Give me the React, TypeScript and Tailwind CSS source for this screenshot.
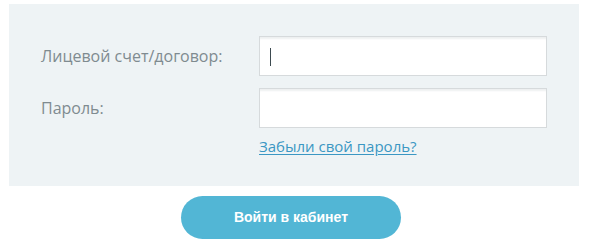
export default function App() {
  return (
    <div className="w-[591px] h-[248px] bg-white pt-[4px] font-['Open_Sans',sans-serif]">
      {/* Login panel */}
      <div className="ml-[9px] w-[570px] h-[182px] bg-[#eef3f5] pt-[32px] pl-[32px]">
        <div className="flex items-center h-[40px]">
          <label className="w-[218px] text-[16px] text-[#7f8b90]">Лицевой счет/договор:</label>
          <div className="relative w-[288px] h-[40px] bg-white border border-[#d6dadc] shadow-[inset_0_3px_2px_-1px_#eef0f1]">
            <span className="absolute left-[10px] top-[11px] w-px h-[18px] bg-[#3d4a50]" />
          </div>
        </div>
        <div className="flex items-center h-[40px] mt-[12px]">
          <label className="w-[218px] text-[16px] text-[#7f8b90]">Пароль:</label>
          <div className="w-[288px] h-[40px] bg-white border border-[#d6dadc] shadow-[inset_0_3px_2px_-1px_#eef0f1]" />
        </div>
        <a href="#" className="block ml-[218px] mt-[8px] text-[15px] leading-[20px] text-[#3b97c3] underline underline-offset-2">
          Забыли свой пароль?
        </a>
      </div>

      {/* Submit */}
      <div className="flex pl-[181px] mt-[10px]">
        <button className="w-[220px] h-[43px] rounded-full bg-[#52b6d5] text-white text-[14px] font-bold font-['Liberation_Sans',Arial,sans-serif]">
          Войти в кабинет
        </button>
      </div>
    </div>
  );
}
